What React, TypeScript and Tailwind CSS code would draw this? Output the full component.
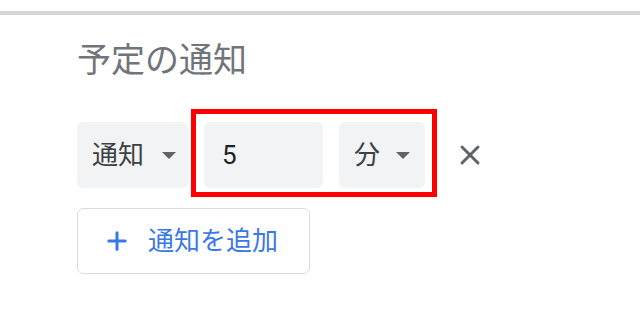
import { X, Plus } from "lucide-react";

const font = { fontFamily: '"Roboto", "Noto Sans CJK JP", sans-serif' };

function Caret() {
  return (
    <svg width="14" height="7" viewBox="0 0 14 7" className="shrink-0">
      <path d="M0 0h14L7 7z" fill="#5f6368" />
    </svg>
  );
}

export default function App() {
  return (
    <div className="w-[640px] h-[316px] bg-white overflow-hidden" style={font}>
      {/* top divider */}
      <div className="mt-[11px] h-[4px] bg-[#d6d6d9]" />

      <div className="pl-[77px]">
        {/* Title */}
        <div className="mt-[28px] text-[34px] leading-[34px] text-[#70757a]">予定の通知</div>

        {/* Reminder row */}
        <div className="mt-[32px] flex items-start">
          <div className="mt-[13px] w-[111px] h-[66px] rounded-[6px] bg-[#f1f3f4] flex items-center pl-[15px] gap-[18px]">
            <span className="text-[26px] text-[#3c4043]">通知</span>
            <Caret />
          </div>

          {/* highlighted box */}
          <div className="ml-[3px] border-[5px] border-[#ff0000] pt-[8px] pb-[4px] pl-[8px] pr-[7px] flex gap-[16px]">
            <div className="w-[119px] h-[66px] rounded-[6px] bg-[#f1f3f4] flex items-center pl-[18px]">
              <span className="text-[26px] text-[#202124]">5</span>
            </div>
            <div className="w-[86px] h-[66px] rounded-[6px] bg-[#f1f3f4] flex items-center pl-[15px] gap-[16px]">
              <span className="text-[26px] text-[#3c4043]">分</span>
              <Caret />
            </div>
          </div>

          <div className="ml-[17px] mt-[30px] text-[#5f6368]">
            <X size={32} strokeWidth={2.2} />
          </div>
        </div>

        {/* Add button */}
        <div className="mt-[11px] w-[233px] h-[66px] rounded-[6px] border border-[#dadce0] flex items-center pl-[25px] gap-[17px] text-[#3b78e7]">
          <Plus size={28} strokeWidth={2.6} />
          <span className="text-[26px]">通知を追加</span>
        </div>
      </div>
    </div>
  );
}
